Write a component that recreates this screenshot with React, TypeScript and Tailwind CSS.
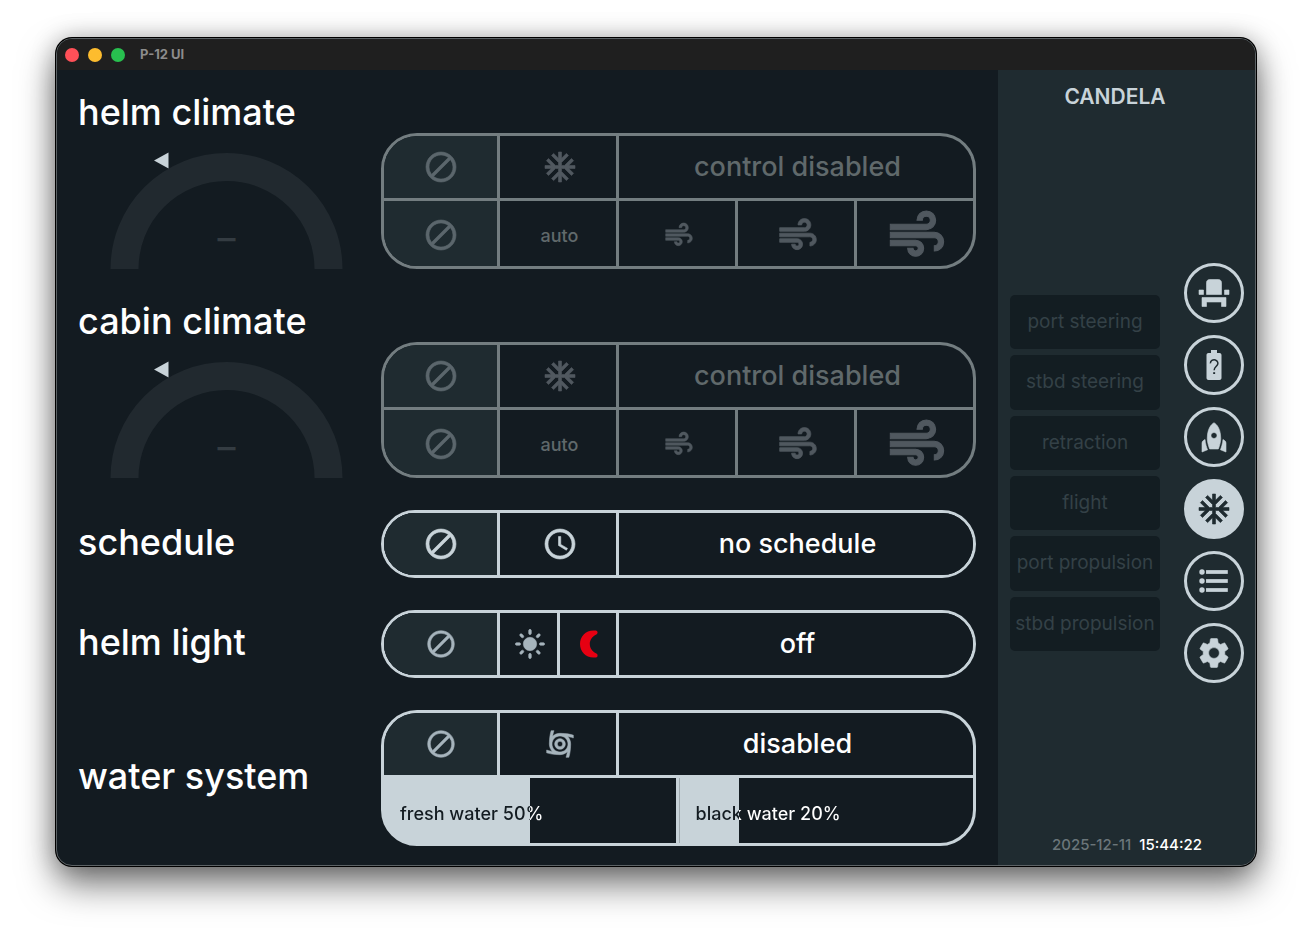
import type { ReactNode } from "react";
import {
  MdAccessTime,
  MdAcUnit,
  MdAir,
  MdBlock,
  MdCyclone,
  MdEventSeat,
  MdLightMode,
  MdRocket,
  MdSettings,
} from "react-icons/md";

const columns = "grid grid-cols-[116fr_119fr_119fr_119fr_116fr] bg-[#131b21]";

// Slightly bolder glyphs; the transparent bounding path some icons carry stays unstroked.
const bold = "[&_path]:stroke-current [&_path]:[stroke-width:0.4] [&_path[fill=none]]:stroke-none";

function Moon() {
  return (
    <svg width="20" height="28" viewBox="0 0 20 28" aria-hidden="true">
      <path
        d="M14.500 0.500C6.500 0.500 1 6.500 1 14S6.500 27.500 14.500 27.500H17Q18.600 27.200 18.600 25.400Q18.600 24.400 17.400 23.600C13.200 21.600 10.800 18 10.800 14S13.200 6.400 17.400 4.400Q18.600 3.600 18.600 2.600Q18.600 0.800 17 0.500Z"
        fill="#e60012"
      />
    </svg>
  );
}

function Battery({ size }: { size: number }) {
  return (
    <svg width={size} height={size} viewBox="0 0 24 24" aria-hidden="true">
      <path
        d="M15.670 4H14V2h-4v2H8.330C7.600 4 7 4.600 7 5.330v15.330C7 21.400 7.600 22 8.330 22h7.330c.740 0 1.340-.600 1.340-1.330V5.330C17 4.600 16.400 4 15.670 4z"
        fill="currentColor"
      />
      <g className="stroke-[#1f2b30]" fill="none">
        <path d="M9.600 10.900A2.500 2.300 0 1 1 14.100 12.200C13.200 13.300 12.100 13.700 12.100 15.500" strokeWidth="1" />
        <path d="M12.100 16.800V18" strokeWidth="1.3" />
      </g>
    </svg>
  );
}

function List({ size }: { size: number }) {
  return (
    <svg width={size} height={size} viewBox="0 0 24 24" fill="currentColor" aria-hidden="true">
      {[6, 12, 18].map((y) => (
        <g key={y}>
          <circle cx="4" cy={y} r="1.8" />
          <rect x="6.700" y={y - 1.25} width="14.500" height="2.500" />
        </g>
      ))}
    </svg>
  );
}

type CellProps = {
  label?: string;
  children: ReactNode;
  className?: string;
  disabled?: boolean;
};

function Cell({ label, children, className = "", disabled }: CellProps) {
  return (
    <button
      type="button"
      aria-label={label}
      disabled={disabled}
      className={`flex min-w-0 items-center justify-center border-inherit ${bold} ${className}`}
    >
      {children}
    </button>
  );
}

function Pill({ muted, children }: { muted?: boolean; children: ReactNode }) {
  return (
    <div
      className={`flex flex-col overflow-hidden rounded-[36px] border-[3px] ${
        muted
          ? "border-[#737d80] bg-[#737d80] text-[#50585f]"
          : "border-[#c8d3d9] bg-[#c8d3d9] text-[#a6b4bc]"
      }`}
    >
      {children}
    </div>
  );
}

function Gauge() {
  return (
    <svg
      width="233"
      height="117"
      viewBox="0 0 233 117"
      className="mx-auto mt-5"
      role="img"
      aria-label="temperature"
    >
      <path d="M14.500 117a102 102 0 0 1 204 0" fill="none" stroke="#21292f" strokeWidth="28" />
      <path d="M44 8.500L58.500 0.500V16.500Z" fill="#c8d3d9" />
      <text x="116.500" y="99" textAnchor="middle" fontSize="36" fontWeight="500" fill="#343c42">
        –
      </text>
    </svg>
  );
}

function Climate({ title }: { title: string }) {
  return (
    <section className="grid grid-cols-[303fr_595fr] items-end">
      <div className="flex flex-col pr-[6px]">
        <h2 className="text-[36px] leading-[40px] font-medium">{title}</h2>
        <Gauge />
      </div>
      <Pill muted>
        <div className={`${columns} h-[65px] border-b-[3px] border-inherit`}>
          <Cell label="off" disabled className="border-r-[3px] bg-[#1f2b30] text-[#5b666c]">
            <MdBlock size={36} />
          </Cell>
          <Cell label="cool" disabled className="border-r-[3px] pl-[3px]">
            <MdAcUnit size={36} />
          </Cell>
          <p className="col-span-3 flex items-center justify-center pl-[3px] text-[27px] font-medium text-[#60696b]">
            control disabled
          </p>
        </div>
        <div className={`${columns} h-[65px] border-inherit`}>
          <Cell label="fan off" disabled className="border-r-[3px] bg-[#1f2b30] pt-[2px] text-[#5b666c]">
            <MdBlock size={36} />
          </Cell>
          <Cell disabled className="border-r-[3px] pt-[2px] pl-[3px] text-[18px] font-medium text-[#60696b]">
            auto
          </Cell>
          <Cell label="fan low" disabled className="border-r-[3px] pt-[2px] pl-[3px]">
            <MdAir size={32} />
          </Cell>
          <Cell label="fan medium" disabled className="border-r-[3px] pt-[2px] pl-[3px]">
            <MdAir size={44} />
          </Cell>
          <Cell label="fan high" disabled className="pt-[2px] pl-[3px]">
            <MdAir size={64} className="shrink-0" />
          </Cell>
        </div>
      </Pill>
    </section>
  );
}

function Row({ title, children }: { title: string; children: ReactNode }) {
  return (
    <section className="grid grid-cols-[303fr_595fr] items-center">
      <h2 className="pb-1 text-[36px] leading-[40px] font-medium">{title}</h2>
      <Pill>{children}</Pill>
    </section>
  );
}

function State({ children }: { children: ReactNode }) {
  return (
    <p className="col-span-3 flex items-center justify-center pl-[3px] text-[27px] font-medium text-white">
      {children}
    </p>
  );
}

function split(percent: number, left: string, right: string) {
  return { backgroundImage: `linear-gradient(to right, ${left} ${percent}%, ${right} ${percent}%)` };
}

function Level({ name, percent, className }: { name: string; percent: number; className: string }) {
  return (
    <div
      className={`flex min-w-0 items-center pt-[6px] text-[18px] font-medium ${className}`}
      style={split(percent, "#c8d3d9", "#131b21")}
    >
      <span
        className="w-full bg-clip-text pl-4 whitespace-nowrap text-transparent"
        style={split(percent, "#131b21", "#ffffff")}
      >
        {name} {percent}%
      </span>
    </div>
  );
}

const systems = [
  "port steering",
  "stbd steering",
  "retraction",
  "flight",
  "port propulsion",
  "stbd propulsion",
];

const pages = [
  { name: "seats", Icon: MdEventSeat, stroke: true },
  { name: "battery", Icon: Battery },
  { name: "flight", Icon: MdRocket, stroke: true },
  { name: "climate", Icon: MdAcUnit, stroke: true, active: true },
  { name: "list", Icon: List },
  { name: "settings", Icon: MdSettings, stroke: true },
];

function Sidebar() {
  return (
    <aside className="flex w-[257px] shrink-0 flex-col bg-[#1f2b30] pr-[11px] pl-3">
      <div className="flex h-[52px] items-center justify-center pt-px pr-6 text-[21px] font-semibold text-[#c8d3d9]">
        CANDELA
      </div>
      <div className="flex flex-1 items-center justify-between">
        <div className="grid min-h-[356px] w-[150px] auto-rows-fr gap-[6px]">
          {systems.map((s) => (
            <button
              key={s}
              type="button"
              disabled
              className="rounded-[5px] bg-[#131d22] text-[19px] whitespace-nowrap text-[#344147]"
            >
              {s}
            </button>
          ))}
        </div>
        <nav className="flex flex-col gap-3">
          {pages.map(({ name, Icon, stroke, active }) => (
            <button
              key={name}
              type="button"
              aria-label={name}
              className={`flex size-[60px] items-center justify-center rounded-full border-[3px] border-[#c8d3d9] ${
                active ? "bg-[#c8d3d9] text-[#1f2b30]" : "text-[#c8d3d9]"
              } ${stroke ? bold : ""}`}
            >
              <Icon size={36} />
            </button>
          ))}
        </nav>
      </div>
      <div className="flex h-[41px] items-center justify-center gap-2 pt-[2px] text-[15px] font-medium">
        <span className="text-[#6b767a]">2025-12-11</span>
        <time className="text-white">15:44:22</time>
      </div>
    </aside>
  );
}

export default function App() {
  return (
    <div className="flex min-h-screen bg-white px-14 pt-[38px] pb-[74px] font-['Inter','Liberation_Sans',sans-serif] text-white">
      <div className="flex flex-1 flex-col overflow-hidden rounded-[16px] border border-[#5c6265] bg-[#131b21] shadow-[0_0_0_1px_#000,0_18px_36px_rgba(0,0,0,0.55),0_0_24px_rgba(0,0,0,0.25)]">
        <header className="flex h-[31px] items-center gap-[9px] bg-[#1f1f1f] pl-2">
          <button type="button" aria-label="close" className="size-[14px] rounded-full bg-[#ff5058]" />
          <button type="button" aria-label="minimize" className="size-[14px] rounded-full bg-[#fdbc2e]" />
          <button type="button" aria-label="zoom" className="size-[14px] rounded-full bg-[#28c04f]" />
          <h1 className="pl-[6px] text-[13px] font-bold text-[#8c8c8c]">P-12 UI</h1>
        </header>
        <div className="flex flex-1">
          <main className="flex min-w-0 flex-1 flex-col gap-8 pt-[22px] pr-[22px] pb-[19px] pl-[21px]">
            <Climate title="helm climate" />
            <Climate title="cabin climate" />
            <Row title="schedule">
              <div className={`${columns} h-[62px] border-inherit text-[#c8d3d9]`}>
                <Cell label="no schedule" className="border-r-[3px] bg-[#1f2b30]">
                  <MdBlock size={36} />
                </Cell>
                <Cell label="set schedule" className="border-r-[3px] pl-[3px]">
                  <MdAccessTime size={36} />
                </Cell>
                <State>no schedule</State>
              </div>
            </Row>
            <Row title="helm light">
              <div className={`${columns} h-[62px] border-inherit`}>
                <Cell label="light off" className="border-r-[3px] bg-[#1f2b30]">
                  <MdBlock size={32} />
                </Cell>
                <div className="grid grid-cols-2 border-inherit">
                  <Cell label="day light" className="border-r-[3px] pl-[3px]">
                    <MdLightMode size={32} />
                  </Cell>
                  <button
                    type="button"
                    aria-label="night light"
                    className="flex items-center justify-center border-r-[3px] border-inherit pl-[3px]"
                  >
                    <Moon />
                  </button>
                </div>
                <State>off</State>
              </div>
            </Row>
            <Row title="water system">
              <div className={`${columns} h-[65px] border-b-[3px] border-inherit`}>
                <Cell label="water off" className="border-r-[3px] bg-[#1f2b30]">
                  <MdBlock size={32} />
                </Cell>
                <Cell label="pump" className="border-r-[3px] pl-[3px]">
                  <MdCyclone size={32} />
                </Cell>
                <State>disabled</State>
              </div>
              <div className="grid h-[65px] grid-cols-2 border-inherit">
                <Level name="fresh water" percent={50} className="border-r-[3px] border-inherit" />
                <Level name="black water" percent={20} className="border-l border-[#a0aaaf]" />
              </div>
            </Row>
          </main>
          <Sidebar />
        </div>
      </div>
    </div>
  );
}
